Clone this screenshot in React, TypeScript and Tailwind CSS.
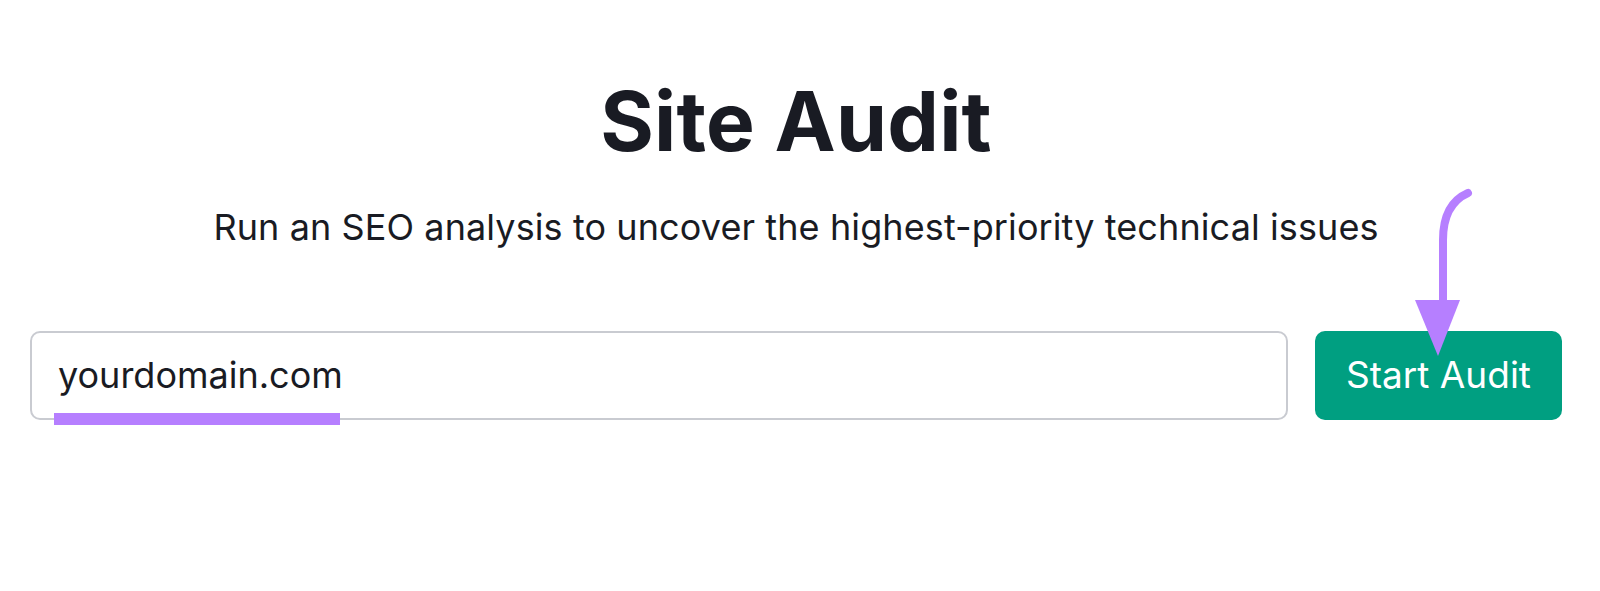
export default function App() {
  return (
    <div
      className="relative w-[1600px] h-[591px] bg-white pl-[30px] pr-[38px] pt-[72px]"
      style={{ fontFamily: "Inter, 'Noto Sans', sans-serif" }}
    >
      <div className="flex flex-col items-center">
        <h1 className="text-[82px] leading-[100px] font-bold text-[#191b23] tracking-[0.2px]">
          Site Audit
        </h1>
        <p className="mt-[33px] text-[36px] leading-[44px] text-[#191b23] tracking-[0.1px]">
          Run an SEO analysis to uncover the highest-priority technical issues
        </p>
      </div>

      <div className="mt-[82px] flex gap-[27px]">
        <div className="relative flex-1 h-[89px] rounded-[10px] border-2 border-[#c9cbd1] flex items-center pl-[26px]">
          <span className="text-[36px] text-[#191b23] -mt-[2px]">yourdomain.com</span>
          {/* highlight */}
          <span className="absolute left-[22px] top-[80px] w-[286px] h-[12px] bg-[#b67fff]" />
        </div>
        <button className="relative w-[247px] h-[89px] rounded-[10px] bg-[#009f81] text-white text-[37px] pb-[2px]">
          Start Audit
        </button>
      </div>

      {/* arrow */}
      <svg
        className="absolute left-[1400px] top-[180px]"
        width="80"
        height="185"
        viewBox="0 0 80 185"
      >
        <path
          d="M68 13 C52 20 43 35 43 60 L43 122"
          fill="none"
          stroke="#b67fff"
          strokeWidth="8"
          strokeLinecap="round"
        />
        <polygon points="15,120 60,120 38,176" fill="#b67fff" />
      </svg>
    </div>
  );
}
